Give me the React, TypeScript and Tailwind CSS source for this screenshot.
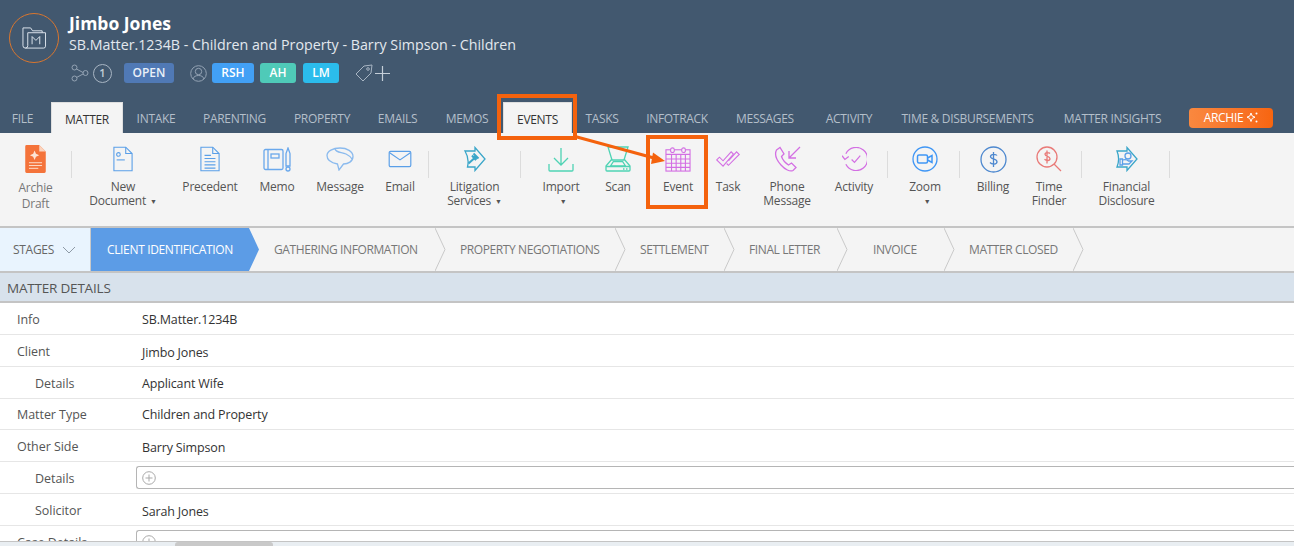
import React from 'react';

type IconProps = { className?: string };

const DocIcon = () => (
  <svg width="20" height="26" viewBox="0 0 22 28" fill="none" stroke="#5a9fe8" strokeWidth="1.2">
    <path d="M1 1h13l7 7v19H1z" />
    <path d="M14 1v7h7" />
    <circle cx="6" cy="9" r="2" />
    <path d="M4 15h9" />
  </svg>
);

const PrecedentIcon = () => (
  <svg width="20" height="26" viewBox="0 0 22 28" fill="none" stroke="#5a9fe8" strokeWidth="1.2">
    <path d="M1 1h13l7 7v19H1z" />
    <path d="M14 1v7h7" />
    <path d="M5 10h7M5 13.500h12M5 17h12M5 20.500h12M5 24h12" />
  </svg>
);

const MemoIcon = () => (
  <svg width="28" height="25" viewBox="0 0 28 25" fill="none" stroke="#6aa8ec" strokeWidth="1.300">
    <rect x="1" y="2.500" width="19" height="20" rx="1.500" />
    <path d="M5 2.500v20" />
    <rect x="8" y="7" width="8" height="4" />
    <path d="M25 1l2 5.500V19h-4V6.500z" />
    <circle cx="25" cy="22" r="2" />
  </svg>
);

const MessageIcon = () => (
  <svg width="28" height="24" viewBox="0 0 28 24" fill="none" stroke="#8abaee" strokeWidth="1.300">
    <path d="M14 1c7 0 13 3.500 13 8.500 0 5-5 7.500-9.500 7.500L13 23l-1.500-6C6 16 1 13.500 1 8.500 1 4 7 1 14 1z" />
    <path d="M9 2c1 4 7 3 11 5 3 1.500 5 3 6 5" />
  </svg>
);

const EmailIcon = () => (
  <svg width="24" height="18" viewBox="0 0 26 20" fill="none" stroke="#5a9fe8" strokeWidth="1.300">
    <rect x="1" y="1.500" width="24" height="17" rx="1.500" />
    <path d="M1.500 3L13 11 24.500 3" />
  </svg>
);

const ArchieDraftIcon = () => (
  <svg width="21" height="28" viewBox="0 0 22 30">
    <path d="M1.500 0H15l7 7v21.500a1.500 1.500 0 0 1-1.500 1.500h-19A1.500 1.500 0 0 1 0 28.500V1.500A1.500 1.500 0 0 1 1.500 0z" fill="#f4733a" />
    <path d="M15 0v7h7z" fill="#fbd3bd" />
    <path d="M10 6l1.500 3.500L15 11l-3.500 1.500L10 16l-1.500-3.500L5 11l3.500-1.500z" fill="#fde4d4" />
    <path d="M4 19h14M4 22h14M4 25h10" stroke="#fde4d4" strokeWidth="1" />
  </svg>
);

const LitigationIcon = () => (
  <svg width="23" height="26" viewBox="0 0 23 26" fill="none" stroke="#3aa6c9" strokeWidth="1.300">
    <path d="M2 5h10V1.500L22 13 12 24.500V21H4.500C6 15 5 10 2 5z" />
    <path d="M10.500 7.500l5 5" strokeWidth="2" />
    <path d="M12 10l2 2-1.500 1.500-2-2z" fill="#3aa6c9" />
    <path d="M11 12.500l-5.500 5" strokeWidth="2" />
    <path d="M9 9.500l4 4.500" strokeWidth="2" />
  </svg>
);

const ImportIcon = () => (
  <svg width="26" height="25" viewBox="0 0 26 25" fill="none" stroke="#4fd3b4" strokeWidth="1.300">
    <path d="M13 1v17M6 11l7 7 7-7" />
    <path d="M1 17v6a1 1 0 0 0 1 1h22a1 1 0 0 0 1-1v-6" />
  </svg>
);

const ScanIcon = () => (
  <svg width="26" height="26" viewBox="0 0 26 26" fill="none" stroke="#4fd3b4" strokeWidth="1.300">
    <path d="M3 1h20l-4 13H7z" />
    <path d="M7 13l-6 7v4a1 1 0 0 0 1 1h22a1 1 0 0 0 1-1v-4l-6-7" />
    <path d="M8.500 15.500h9l3 4.500h-15z" />
    <path d="M1 20.500h24M18 23h1.500M21 23h1.500" />
  </svg>
);

const EventIcon = () => (
  <svg width="26" height="25" viewBox="0 0 28 27" fill="none" stroke="#d36fe3" strokeWidth="1.200">
    <rect x="1" y="3" width="26" height="23" />
    <rect x="6" y="1" width="4" height="5" rx="2" fill="#f4f4f4" />
    <rect x="18" y="1" width="4" height="5" rx="2" fill="#f4f4f4" />
    <path d="M1 8h26M1 13h26M1 17.500h26M1 22h26M7 8v18M12 8v18M17 8v18M22 8v18" />
  </svg>
);

const TaskIcon = () => (
  <svg width="26" height="18" viewBox="0 0 27 20" fill="none" stroke="#d36fe3" strokeWidth="1.200">
    <path d="M1 11l3-3 4 4 9-10 2.500 2.500L8 18z" />
    <path d="M12 15l2 2L26 5l-3-3-9 10" />
  </svg>
);

const PhoneMessageIcon = () => (
  <svg width="27" height="26" viewBox="0 0 27 26" fill="none" stroke="#d36fe3" strokeWidth="1.300">
    <path d="M2.500 4L6 1.500 10 8 7.500 10.500c1 3 4 6.500 7 8.500l3-2 4.500 4.500-3 3c-3 1.500-8-1-12-5.500S0 9 2.500 4z" />
    <path d="M26 1L15 12M15 5v7h7" />
  </svg>
);

const ActivityIcon = () => (
  <svg width="25" height="24" viewBox="0 0 26 25" fill="none" stroke="#d36fe3" strokeWidth="1.300">
    <path d="M4 7a12 12 0 1 1 0 11" />
    <path d="M0 9l3 4 4-3" />
    <path d="M10 13l3 3 6-7" />
  </svg>
);

const ZoomIcon = () => (
  <svg width="26" height="26" viewBox="0 0 26 26" fill="none" stroke="#3f96f5" strokeWidth="1.300">
    <circle cx="13" cy="13" r="12" />
    <rect x="5.500" y="9" width="10" height="8" rx="1.500" strokeWidth="1.500" />
    <path d="M15.500 12l4.500-2.500v7L15.500 14" strokeWidth="1.500" />
  </svg>
);

const BillingIcon = () => (
  <svg width="27" height="27" viewBox="0 0 27 27" fill="none" stroke="#4d88cf" strokeWidth="1.300">
    <circle cx="13.500" cy="13.500" r="12.500" />
    <path d="M17 9.500c-1-1.500-6-2-6.500.8-.5 3 6.500 2.200 6.500 5.500 0 3-5.500 2.700-7 .7M13.500 6v15" />
  </svg>
);

const TimeFinderIcon = () => (
  <svg width="26" height="27" viewBox="0 0 26 27" fill="none" stroke="#e97a78" strokeWidth="1.300">
    <circle cx="11" cy="11" r="10" />
    <path d="M18 18l7 7" />
    <path d="M14 7.500c-1-1.200-5-1.500-5 .8 0 2.500 5 1.700 5 4.500 0 2.400-4 2-5.500.5M11 4.500v13" />
  </svg>
);

const FinancialIcon = () => (
  <svg width="23" height="26" viewBox="0 0 23 26" fill="none" stroke="#3aa6c9" strokeWidth="1.300">
    <path d="M2 5h10V1.500L22 13 12 24.500V21H2c2-5 2-11 0-16z" />
    <circle cx="13" cy="10" r="3" stroke="#5a9fe8" />
    <path d="M5 13h2.500v6H5zM7.500 14c3-1 5 0 6 1H17l-3 3H7.500" stroke="#5a9fe8" />
  </svg>
);

const MatterFolderIcon = ({ className }: IconProps) => (
  <svg className={className} width="26" height="24" viewBox="0 0 26 25" fill="none" stroke="#dfe6ee" strokeWidth="1">
    <path d="M4 23a2.500 2.500 0 0 1-2.500-2.500V2h8l2 3h10v2" />
    <path d="M4 23a2.500 2.500 0 0 0 2.500-2.500V7H25v14a2 2 0 0 1-2 2z" />
    <path d="M11 19v-8l4 4 4-4v8" />
  </svg>
);

const ShareIcon = () => (
  <svg width="18" height="18" viewBox="0 0 18 18" fill="none" stroke="#94a3b4" strokeWidth="1">
    <circle cx="3.500" cy="3.500" r="2.500" />
    <circle cx="14.500" cy="9" r="2.500" />
    <circle cx="3.500" cy="14.500" r="2.500" />
    <path d="M5.500 5l6.500 3.500M12 10l-6.500 3.500" />
  </svg>
);

const UserIcon = () => (
  <svg width="17" height="17" viewBox="0 0 17 17" fill="none" stroke="#94a3b4" strokeWidth="1">
    <circle cx="8.500" cy="8.500" r="7.800" />
    <circle cx="8.500" cy="6.500" r="3.200" />
    <path d="M3 14c.6-2.500 3-3.500 5.500-3.500S13.400 11.500 14 14" />
  </svg>
);

const TagIcon = () => (
  <svg width="18" height="18" viewBox="0 0 18 18" fill="none" stroke="#a8b5c3" strokeWidth="1">
    <path d="M1 10l8-8 8-1-1 8-8 8z" />
    <circle cx="13" cy="5" r="1.300" />
  </svg>
);

const Sparkle = () => (
  <svg width="12" height="12" viewBox="0 0 12 12" fill="#fff">
    <path d="M5 1l1.200 3L9 5.200 6.200 6.400 5 9.500 3.800 6.400 1 5.200 3.800 4z" fill="none" stroke="#fff" strokeWidth="1" />
    <circle cx="10.500" cy="1.500" r="1" />
    <circle cx="10.500" cy="9.500" r="1" />
  </svg>
);

const tabs: { label: string; width: string; active?: boolean; extra?: string }[] = [
  { label: 'FILE', width: 'w-[51px]', extra: 'pr-[6px]' },
  { label: 'MATTER', width: 'w-[72px]', active: true },
  { label: 'INTAKE', width: 'w-[66px]' },
  { label: 'PARENTING', width: 'w-[91px]' },
  { label: 'PROPERTY', width: 'w-[84px]' },
  { label: 'EMAILS', width: 'w-[67px]' },
  { label: 'MEMOS', width: 'w-[72px]' },
  { label: 'EVENTS', width: 'w-[69px]', active: true },
  { label: 'TASKS', width: 'w-[60px]' },
  { label: 'INFOTRACK', width: 'w-[90px]' },
  { label: 'MESSAGES', width: 'w-[86px]' },
  { label: 'ACTIVITY', width: 'w-[77px]', extra: 'pl-[5px]' },
  { label: 'TIME & DISBURSEMENTS', width: 'w-[165px]' },
  { label: 'MATTER INSIGHTS', width: 'w-[125px]' },
];

const Sep = ({ className }: IconProps) => <div className={`w-px h-[27px] bg-[#dcdcdc] mt-[18px] shrink-0 ${className ?? ''}`} />;

const Tool = ({ icon, lines, width, caret, grey, className }: {
  icon: React.ReactNode; lines: string[]; width: string; caret?: boolean; grey?: boolean; className?: string;
}) => (
  <div className={`flex flex-col items-center shrink-0 pt-[7px] ${width} ${className ?? ''}`}>
    <div className="h-[38px] flex items-center justify-center">{icon}</div>
    <div className={`mt-[2px] text-center whitespace-nowrap text-[12px] tracking-[-0.2px] ${grey ? 'text-[#777] leading-[16px]' : 'text-[#555] leading-[14px]'}`}>
      {lines.map((l, i) => (
        <div key={l}>
          {l}
          {caret && i === lines.length - 1 && <span className="ml-1 text-[7px] align-middle">▼</span>}
        </div>
      ))}
    </div>
  </div>
);

const stages = [
  { label: 'GATHERING INFORMATION', width: 'w-[186px]', pad: 'pl-[25px]' },
  { label: 'PROPERTY NEGOTIATIONS', width: 'w-[180px]', pad: 'pl-[25px]' },
  { label: 'SETTLEMENT', width: 'w-[109px]', pad: 'pl-[25px]' },
  { label: 'FINAL LETTER', width: 'w-[113px]', pad: 'pl-[25px]' },
  { label: 'INVOICE', width: 'w-[107px]', pad: 'pl-[36px]' },
  { label: 'MATTER CLOSED', width: 'w-[129px]', pad: 'pl-[25px]' },
];

const Row = ({ label, value, nested, input, height, valuePad }: {
  label: string; value?: string; nested?: boolean; input?: boolean; height: string; valuePad?: string;
}) => (
  <div className={`flex items-center border-b border-[#e6e6e6] shrink-0 ${height}`}>
    <div className={`w-[136px] shrink-0 pt-[3px] text-[12.500px] tracking-[-0.05px] text-[#555] ${nested ? 'pl-[35px]' : 'pl-[17px]'}`}>{label}</div>
    {input ? (
      <div className="flex-1 h-[23px] border border-r-0 border-[#b5b5b5] rounded-l-[3px] flex items-center pl-[5px]">
        <svg width="14" height="14" viewBox="0 0 14 14" fill="none" stroke="#a9a9a9" strokeWidth="1">
          <circle cx="7" cy="7" r="6.300" />
          <path d="M7 3.500v7M3.500 7h7" />
        </svg>
      </div>
    ) : (
      <div className={`pl-[6px] text-[12.500px] tracking-[-0.15px] text-[#333] ${valuePad ?? 'pt-[3px]'}`}>{value}</div>
    )}
  </div>
);

export default function App() {
  return (
    <div className="relative w-[1294px] h-[546px] overflow-hidden flex flex-col bg-white font-['Open_Sans',sans-serif]">
      {/* matter header */}
      <div className="bg-[#42586f] h-[133px] shrink-0 flex flex-col">
        <div className="h-[102px] flex pl-[9px] pt-[13px]">
          <div className="w-[50px] h-[50px] rounded-full border-[1.5px] border-[#d9762e] flex items-center justify-center shrink-0">
            <MatterFolderIcon />
          </div>
          <div className="ml-[10px] -mt-px">
            <div className="text-[17.500px] leading-[22px] font-bold text-white">Jimbo Jones</div>
            <div className="text-[14.250px] leading-[22px] text-[#e3e8ee]">SB.Matter.1234B - Children and Property - Barry Simpson - Children</div>
            <div className="flex items-center mt-[7px] ml-[2px] h-[20px]">
              <ShareIcon />
              <div className="ml-[4px] w-[19px] h-[19px] rounded-full border border-[#a8b5c3] text-[#c4ced8] text-[11px] font-semibold flex items-center justify-center">1</div>
              <div className="ml-[12px] w-[50px] h-[20px] rounded-[3px] bg-[#5079b5] text-[#eaf0f8] text-[12px] font-semibold flex items-center justify-center">OPEN</div>
              <div className="ml-[16px]"><UserIcon /></div>
              <div className="ml-[5px] w-[42px] h-[20px] rounded-[3px] bg-[#42a0f5] text-white text-[12px] font-semibold flex items-center justify-center">RSH</div>
              <div className="ml-[6px] w-[36px] h-[20px] rounded-[3px] bg-[#4fcab8] text-white text-[12px] font-semibold flex items-center justify-center">AH</div>
              <div className="ml-[7px] w-[36px] h-[20px] rounded-[3px] bg-[#2bbcec] text-white text-[12px] font-semibold flex items-center justify-center">LM</div>
              <div className="ml-[16px]"><TagIcon /></div>
              <svg className="ml-[2px]" width="15" height="15" viewBox="0 0 15 15" stroke="#c4ced8" strokeWidth="1.200">
                <path d="M7.500 0v15M0 7.500h15" />
              </svg>
            </div>
          </div>
        </div>
        <div className="h-[31px] flex items-end">
          {tabs.map((t) => (
            <div
              key={t.label}
              className={`${t.width} ${t.extra ?? ''} h-[31px] pt-[3px] shrink-0 flex items-center justify-center text-[12px] whitespace-nowrap tracking-[-0.3px] ${
                t.active ? 'bg-[#f4f4f4] border border-b-0 border-[#dfdfdf] text-[#333]' : 'text-[#b4bfca]'
              }`}
            >
              {t.label}
            </div>
          ))}
          <div className="ml-[14px] mb-[5px] w-[84px] h-[20px] rounded-[4px] bg-gradient-to-r from-[#f9883f] to-[#f7650f] text-white text-[12px] tracking-[-0.3px] flex items-center justify-center gap-[3px]">
            ARCHIE <Sparkle />
          </div>
        </div>
      </div>

      {/* ribbon */}
      <div className="h-[93px] shrink-0 bg-[#f4f4f4] flex">
        <Tool icon={<ArchieDraftIcon />} lines={['Archie', 'Draft']} width="w-[71px]" grey />
        <Sep />
        <Tool icon={<DocIcon />} lines={['New', 'Document']} width="w-[102px]" caret />
        <Tool icon={<PrecedentIcon />} lines={['Precedent']} width="w-[72px]" />
        <Tool icon={<MemoIcon />} lines={['Memo']} width="w-[62px]" />
        <Tool icon={<MessageIcon />} lines={['Message']} width="w-[64px]" />
        <Tool icon={<EmailIcon />} lines={['Email']} width="w-[56px]" />
        <Sep />
        <Tool icon={<LitigationIcon />} lines={['Litigation', 'Services']} width="w-[91px]" caret />
        <Sep />
        <Tool icon={<ImportIcon />} lines={['Import', '']} width="w-[64px]" className="ml-[8px]" caret />
        <Tool icon={<ScanIcon />} lines={['Scan']} width="w-[50px]" />
        <Tool icon={<EventIcon />} lines={['Event']} width="w-[70px]" />
        <Tool icon={<TaskIcon />} lines={['Task']} width="w-[30px]" />
        <Tool icon={<PhoneMessageIcon />} lines={['Phone', 'Message']} width="w-[72px]" className="ml-[8px]" />
        <Tool icon={<ActivityIcon />} lines={['Activity']} width="w-[62px]" />
        <Sep className="ml-[2px]" />
        <Tool icon={<ZoomIcon />} lines={['Zoom', '']} width="w-[68px]" className="ml-[3px]" caret />
        <Sep />
        <Tool icon={<BillingIcon />} lines={['Billing']} width="w-[66px]" />
        <Tool icon={<TimeFinderIcon />} lines={['Time', 'Finder']} width="w-[46px]" />
        <Sep className="ml-[9px]" />
        <Tool icon={<FinancialIcon />} lines={['Financial', 'Disclosure']} width="w-[85px]" className="ml-[2px]" />
        <Sep />
      </div>

      {/* stages */}
      <div className="h-[47px] shrink-0 bg-[#f4f4f4] border-y-2 border-[#c4c4c4] flex">
        <div className="w-[91px] shrink-0 bg-[#e9f4fe] border-r border-[#c9c9c9] flex items-center pl-[13px] gap-[8px] text-[12px] tracking-[-0.3px] text-[#666]">
          STAGES
          <svg width="14" height="8" viewBox="0 0 14 8" fill="none" stroke="#8e9aa6" strokeWidth="1">
            <path d="M1 1l6 6 6-6" />
          </svg>
        </div>
        <div className="relative w-[158px] shrink-0 bg-[#5c9ce6] flex items-center pl-[16px] text-[12px] tracking-[-0.35px] text-white whitespace-nowrap">
          CLIENT IDENTIFICATION
          <svg className="absolute left-full top-0" width="11" height="43" viewBox="0 0 11 43">
            <path d="M0 0l10 21.500L0 43z" fill="#5c9ce6" />
          </svg>
        </div>
        {stages.map((s) => (
          <div key={s.label} className={`relative ${s.width} ${s.pad} shrink-0 flex items-center text-[12px] tracking-[-0.4px] text-[#777] whitespace-nowrap`}>
            {s.label}
            <svg className="absolute right-[-11px] top-0" width="11" height="43" viewBox="0 0 11 43" fill="none" stroke="#c9c9c9">
              <path d="M0 0l10 21.500L0 43" />
            </svg>
          </div>
        ))}
      </div>

      {/* matter details */}
      <div className="h-[30px] shrink-0 bg-[#d8e2ec] border-b-2 border-[#c4c4c4] flex items-center pl-[7px] pt-[3px] text-[13.500px] tracking-[-0.2px] text-[#555]">
        MATTER DETAILS
      </div>
      <div className="flex-1 overflow-hidden">
        <Row label="Info" value="SB.Matter.1234B" height="h-[32px]" />
        <Row label="Client" value="Jimbo Jones" height="h-[32px]" valuePad="pt-[5px]" />
        <Row label="Details" value="Applicant Wife" nested height="h-[32px]" />
        <Row label="Matter Type" value="Children and Property" height="h-[31px]" />
        <Row label="Other Side" value="Barry Simpson" height="h-[32px]" valuePad="pt-[5px]" />
        <Row label="Details" nested input height="h-[32px]" />
        <Row label="Solicitor" value="Sarah Jones" nested height="h-[32px]" valuePad="pt-[5px]" />
        <Row label="Case Details" input height="h-[32px]" />
      </div>
      <div className="h-[5px] shrink-0 bg-[#e9eef2] border-t border-[#c4c4c4] pl-[175px]">
        <div className="w-[98px] h-[4px] bg-[#c9c9c9] rounded-t-[3px]" />
      </div>

      {/* tutorial annotations */}
      <div className="absolute left-[497px] top-[94px] w-[80px] h-[46px] border-[4px] border-[#f4620d]" />
      <div className="absolute left-[646px] top-[135px] w-[62px] h-[74px] border-[4px] border-[#f4620d]" />
      <svg className="absolute left-[570px] top-[130px]" width="100" height="40" viewBox="0 0 100 40">
        <path d="M6 6.700l78 21.300" stroke="#f4620d" strokeWidth="3" />
        <path d="M95 31L83 22.500 81 34z" fill="#f4620d" />
      </svg>
    </div>
  );
}
